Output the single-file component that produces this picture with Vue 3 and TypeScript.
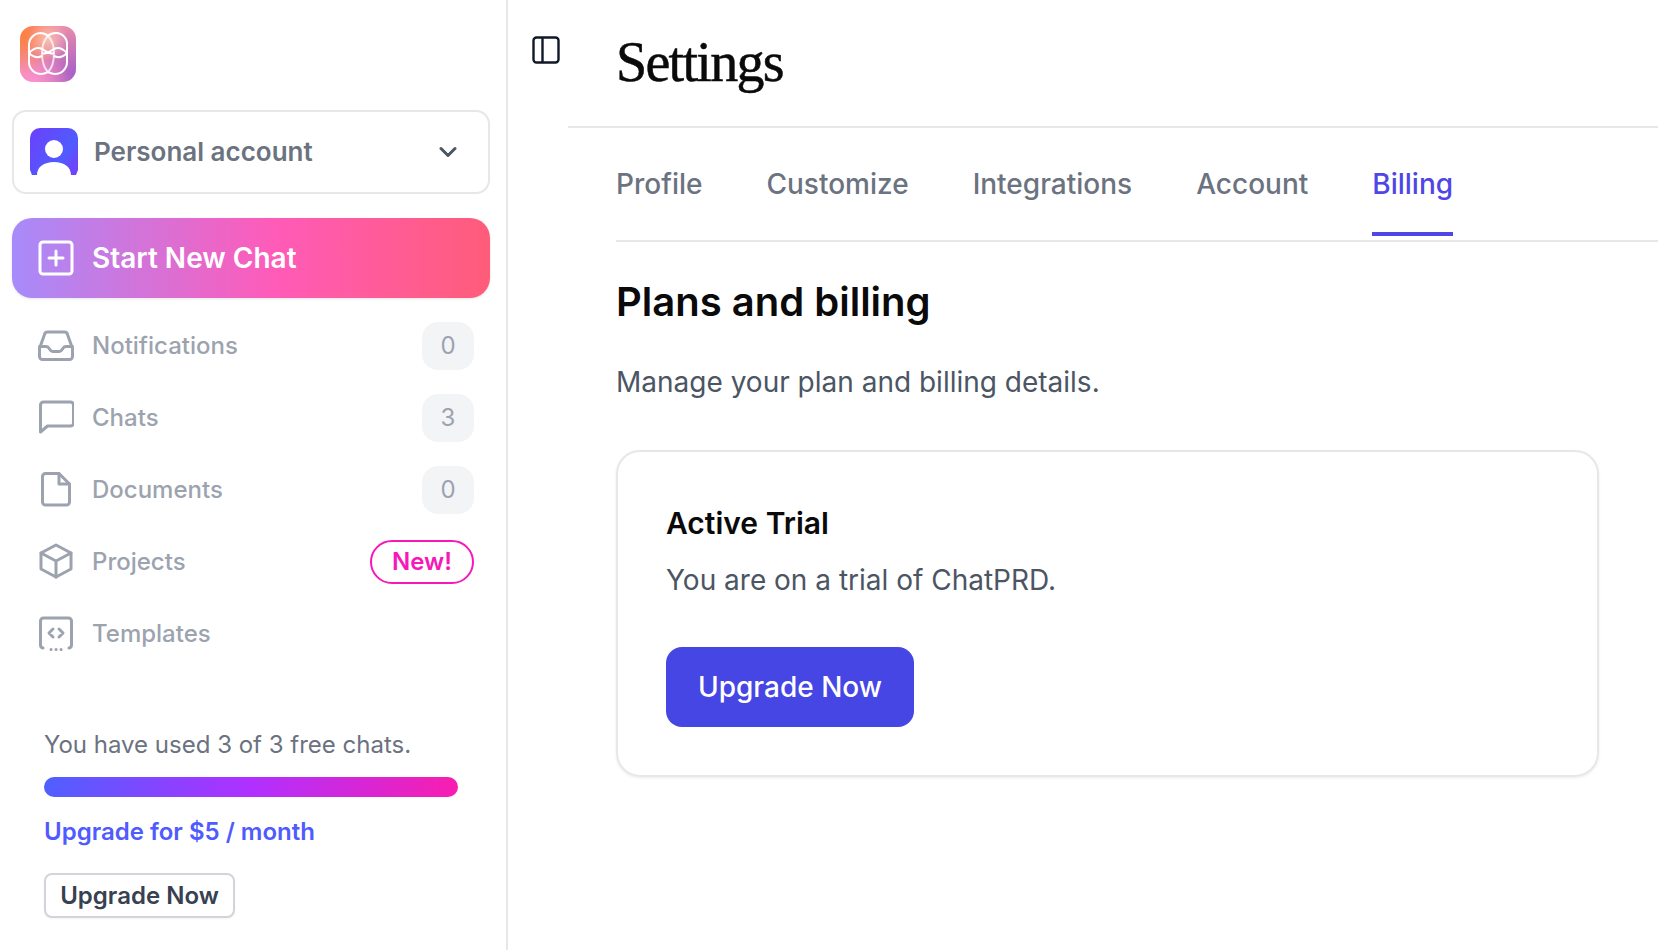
<script setup lang="ts">
const tabs = ['Profile', 'Customize', 'Integrations', 'Account', 'Billing']
const activeTab = 'Billing'

const navItems = [
  { key: 'inbox', label: 'Notifications', count: '0' },
  { key: 'chat', label: 'Chats', count: '3' },
  { key: 'doc', label: 'Documents', count: '0' },
  { key: 'cube', label: 'Projects', isNew: true },
  { key: 'tpl', label: 'Templates' },
]
</script>

<template>
  <div class="page">
    <aside class="sidebar">
      <div class="logo">
        <svg width="56" height="56" viewBox="0 0 56 56" fill="none" stroke="#fff" stroke-width="2">
          <path d="M28 10c-2-2-5-3-8-3H21A12 12 0 0 0 9 19v17a12 12 0 0 0 12 12c3 0 5-1 7-2" />
          <path d="M28 10c2-2 5-3 8-3A11 11 0 0 1 47 19v17a12 12 0 0 1-12 12c-3 0-5-1-7-2" />
          <path d="M28 10c-4 4-6 9-6 17s2 15 6 19c4-4 6-11 6-19s-2-13-6-17z" opacity="0.75" />
          <path d="M9 27c5-5 9-6 13-4s7 6 12 4M47 27c-5-5-9-6-13-4s-7 6-12 4M9 27c5 5 9 5 13 3M47 27c-5 5-9 5-13 3" />
        </svg>
      </div>

      <div class="account">
        <svg class="avatar" width="48" height="48" viewBox="0 0 48 48">
          <defs>
            <linearGradient id="av" x1="0" y1="0" x2="1" y2="0.7">
              <stop offset="0" stop-color="#6d3ffb" />
              <stop offset="0.75" stop-color="#4f5cff" />
              <stop offset="1" stop-color="#6d45fb" />
            </linearGradient>
          </defs>
          <path d="M10 0h28a10 10 0 0 1 10 10v32l-2 5h-5c0-8-7-13-17-13s-17 5-17 13h-5l-2-5V10A10 10 0 0 1 10 0z" fill="url(#av)" />
          <circle cx="24" cy="21" r="9" fill="#fff" />
        </svg>
        <span class="account-name">Personal account</span>
        <svg class="chevron" width="18" height="12" viewBox="0 0 18 12" fill="none" stroke="#4b5563" stroke-width="3" stroke-linecap="round" stroke-linejoin="round">
          <path d="M2 2.500l7 7 7-7" />
        </svg>
      </div>

      <div class="new-chat">
        <svg width="36" height="36" viewBox="0 0 36 36" fill="none" stroke="#fff" stroke-width="3" stroke-linecap="round">
          <rect x="2" y="2" width="32" height="32" rx="3" />
          <path d="M18 11v14M11 18h14" />
        </svg>
        <span>Start New Chat</span>
      </div>

      <nav class="nav">
        <div v-for="item in navItems" :key="item.key" class="nav-item">
          <svg class="nav-icon" width="36" height="36" viewBox="0 0 36 36" fill="none" stroke="#9ca3af" stroke-width="3" stroke-linecap="round" stroke-linejoin="round">
            <template v-if="item.key === 'inbox'">
              <path d="M1.500 21.500v8a3 3 0 0 0 3 3h27a3 3 0 0 0 3-3v-8l-5-14a3 3 0 0 0-3-2.500h-17a3 3 0 0 0-3 2.500z" />
              <path d="M1.500 19.500h7c3 0 3 5 6 5h7c3 0 3-5 6-5h7" />
            </template>
            <template v-else-if="item.key === 'chat'">
              <path d="M2.500 33V6a3 3 0 0 1 3-3h27a3 3 0 0 1 3 3v18a3 3 0 0 1-3 3H9.500z" />
            </template>
            <template v-else-if="item.key === 'doc'">
              <path d="M21 2.500H7.500a3 3 0 0 0-3 3V31a3 3 0 0 0 3 3h21a3 3 0 0 0 3-3V13z" />
              <path d="M21 2.500V13h10.500" />
            </template>
            <template v-else-if="item.key === 'cube'">
              <path d="M18 2l15 8v16l-15 8-15-8V10z" />
              <path d="M3 10l15 8 15-8M18 18v16" />
            </template>
            <template v-else>
              <path d="M5 33a3 3 0 0 1-2.500-3V6a3 3 0 0 1 3-3h25a3 3 0 0 1 3 3v24a3 3 0 0 1-2.500 3" />
              <path d="M15 14l-4 4 4 4M21 14l4 4-4 4M13 34.500h.1M18 34.500h.1M23 34.500h.1" />
            </template>
          </svg>
          <span class="nav-label">{{ item.label }}</span>
          <span v-if="item.count" class="count">{{ item.count }}</span>
          <span v-if="item.isNew" class="new-pill">New!</span>
        </div>
      </nav>

      <div class="usage">
        <p class="usage-text">You have used 3 of 3 free chats.</p>
        <div class="bar"></div>
        <p class="usage-link">Upgrade for $5 / month</p>
        <button class="small-btn">Upgrade Now</button>
      </div>
    </aside>

    <main class="main">
      <header class="topbar">
        <svg class="toggle" width="28" height="28" viewBox="0 0 28 28" fill="none" stroke="#111827" stroke-width="2.400">
          <rect x="1.500" y="1.500" width="25" height="25" rx="3" />
          <path d="M10.500 1.500v25" />
        </svg>
        <div class="title-wrap">
          <h1 class="title">Settings</h1>
        </div>
      </header>

      <div class="content">
        <div class="tabs">
          <span v-for="t in tabs" :key="t" class="tab" :class="{ active: t === activeTab }">{{ t }}</span>
        </div>

        <h2 class="heading">Plans and billing</h2>
        <p class="sub">Manage your plan and billing details.</p>

        <section class="card">
          <h3 class="card-title">Active Trial</h3>
          <p class="card-text">You are on a trial of ChatPRD.</p>
          <button class="primary">Upgrade Now</button>
        </section>
      </div>
    </main>
  </div>
</template>

<style>
html,
body {
  margin: 0;
  background: #fff;
  overflow: hidden;
}
</style>

<style scoped>
.page {
  display: flex;
  width: 1658px;
  height: 950px;
  overflow: hidden;
  font-family: Inter, "Liberation Sans", sans-serif;
}

.sidebar {
  box-sizing: border-box;
  width: 508px;
  flex: none;
  padding: 26px 16px 0 12px;
  border-right: 2px solid #e5e7eb;
}

.logo {
  width: 56px;
  height: 56px;
  margin-left: 8px;
  border-radius: 13px;
  background:
    radial-gradient(circle at 50% 25%, rgba(255, 215, 195, 0.7) 0, rgba(255, 215, 195, 0) 40%),
    radial-gradient(circle at 0% 15%, #ff7f3a 0, rgba(255, 127, 58, 0) 55%),
    radial-gradient(circle at 25% 100%, #fb8fd0 0, rgba(251, 143, 208, 0) 50%),
    radial-gradient(circle at 100% 85%, #a65fc9 0, rgba(166, 95, 201, 0) 70%),
    #ef8fa8;
}

.account {
  box-sizing: border-box;
  display: flex;
  align-items: center;
  height: 84px;
  margin-top: 28px;
  padding: 0 31px 0 16px;
  border: 2px solid #e5e7eb;
  border-radius: 14px;
}

.account-name {
  flex: 1;
  margin: -1px 0 0 16px;
  font-size: 26px;
  font-weight: 600;
  color: #6b7280;
}

.new-chat {
  box-sizing: border-box;
  display: flex;
  align-items: center;
  gap: 18px;
  height: 80px;
  margin-top: 24px;
  padding-left: 26px;
  border-radius: 20px;
  background: linear-gradient(90deg, #a78bfa 0%, #ff5bb8 55%, #ff5c7a 100%);
  box-shadow: 0 1px 3px rgba(0, 0, 0, 0.1);
  font-size: 28px;
  font-weight: 600;
  color: #fff;
}

.nav {
  display: flex;
  flex-direction: column;
  gap: 24px;
  margin-top: 24px;
  padding: 0 16px 0 26px;
}

.nav-item {
  display: flex;
  align-items: center;
  height: 48px;
}

.nav-icon {
  margin-top: -2px;
}

.nav-label {
  flex: 1;
  margin: -2px 0 0 18px;
  font-size: 24px;
  font-weight: 500;
  color: #9ca3af;
}

.count {
  width: 52px;
  height: 48px;
  line-height: 48px;
  text-align: center;
  border-radius: 16px;
  background: #f3f4f6;
  font-size: 24px;
  color: #9ca3af;
}

.new-pill {
  box-sizing: border-box;
  width: 104px;
  height: 44px;
  line-height: 40px;
  text-align: center;
  border: 2px solid #f618b8;
  border-radius: 22px;
  font-size: 24px;
  font-weight: 600;
  color: #f618b8;
}

.usage {
  margin-top: 71px;
  padding-left: 32px;
  padding-right: 32px;
}

.usage-text {
  margin: 0;
  font-size: 24px;
  line-height: 32px;
  color: #6b7280;
}

.bar {
  height: 20px;
  margin-top: 16px;
  border-radius: 10px;
  background: linear-gradient(90deg, #4f5fff 0%, #b030ff 50%, #f81eb0 100%);
}

.usage-link {
  margin: 19px 0 0;
  font-size: 24px;
  line-height: 32px;
  font-weight: 600;
  color: #4f5bff;
}

.small-btn {
  display: block;
  box-sizing: border-box;
  width: 191px;
  height: 45px;
  margin-top: 25px;
  padding: 0;
  border: 2px solid #d1d5db;
  border-radius: 8px;
  background: #fff;
  box-shadow: 0 1px 2px rgba(0, 0, 0, 0.05);
  font-family: inherit;
  font-size: 24px;
  font-weight: 600;
  color: #374151;
}

.main {
  flex: 1;
  min-width: 0;
}

.topbar {
  display: flex;
  height: 128px;
  padding-left: 24px;
}

.toggle {
  margin-top: 36px;
  flex: none;
}

.title-wrap {
  flex: 1;
  margin-left: 8px;
  padding-left: 48px;
  border-bottom: 2px solid #e5e7eb;
}

.title {
  margin: 31px 0 0;
  font-family: "Liberation Serif", serif;
  font-size: 56px;
  line-height: 62px;
  font-weight: 400;
  letter-spacing: -1.700px;
  -webkit-text-stroke: 0.5px #0a0a0a;
  color: #0a0a0a;
}

.content {
  padding-left: 108px;
}

.tabs {
  display: flex;
  gap: 64px;
  height: 114px;
  box-sizing: border-box;
  padding-top: 35px;
  border-bottom: 2px solid #e5e7eb;
}

.tab {
  box-sizing: border-box;
  height: 73px;
  font-size: 28px;
  line-height: 42px;
  font-weight: 500;
  color: #6b7280;
}

.tab.active {
  color: #4f46e5;
  border-bottom: 4px solid #4f46e5;
}

.heading {
  margin: 36px 0 0;
  font-size: 40px;
  line-height: 48px;
  font-weight: 600;
  color: #0a0a0a;
}

.sub {
  margin: 36px 0 0;
  font-size: 28px;
  line-height: 40px;
  color: #4b5563;
}

.card {
  box-sizing: border-box;
  width: 983px;
  height: 327px;
  margin-top: 48px;
  padding: 47px 48px 0;
  border: 2px solid #e5e7eb;
  border-radius: 24px;
  box-shadow: 0 1px 3px rgba(0, 0, 0, 0.08);
}

.card-title {
  margin: 0;
  font-size: 30px;
  line-height: 48px;
  font-weight: 600;
  color: #0a0a0a;
}

.card-text {
  margin: 13px 0 0;
  font-size: 28px;
  line-height: 40px;
  color: #4b5563;
}

.primary {
  display: block;
  width: 248px;
  height: 80px;
  margin-top: 47px;
  padding: 0;
  border: 0;
  border-radius: 16px;
  background: #4646e5;
  font-family: inherit;
  font-size: 28px;
  font-weight: 500;
  color: #fff;
}
</style>
